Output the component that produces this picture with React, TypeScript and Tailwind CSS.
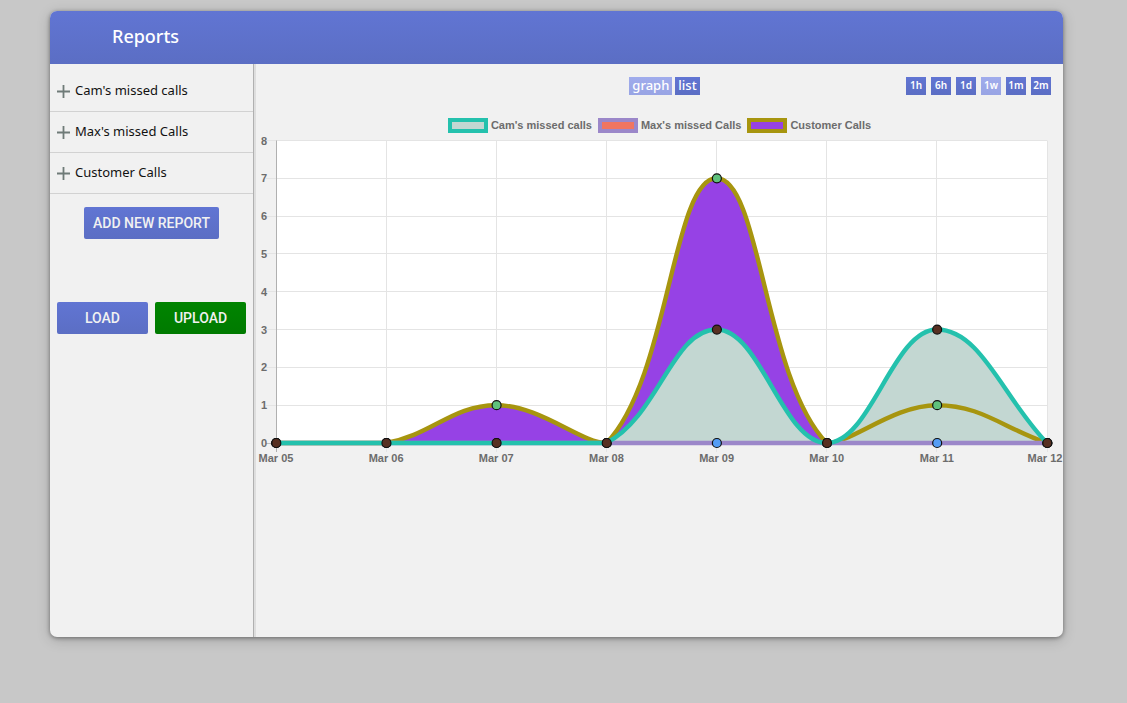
import React from "react";

type Series = {
  name: string;
  values: number[];
  line: string;
  fill: string;
  point: string;
  swatch: string;
};

const days = ["Mar 05", "Mar 06", "Mar 07", "Mar 08", "Mar 09", "Mar 10", "Mar 11", "Mar 12"];

const series: Series[] = [
  {
    name: "Cam's missed calls",
    values: [0, 0, 0, 0, 3, 0, 3, 0],
    line: "#24c1ad",
    fill: "#c3d7d2",
    point: "#573022",
    swatch: "border-[#24c1ad] bg-[#c3d7d2]",
  },
  {
    name: "Max's missed Calls",
    values: [0, 0, 0, 0, 0, 0, 0, 0],
    line: "#9b87c9",
    fill: "#f07560",
    point: "#559df5",
    swatch: "border-[#9b87c9] bg-[#f07560]",
  },
  {
    name: "Customer Calls",
    values: [0, 0, 1, 0, 7, 0, 1, 0],
    line: "#a7950f",
    fill: "#9642e5",
    point: "#5fc17c",
    swatch: "border-[#a7950f] bg-[#9642e5]",
  },
];

const WIDTH = 807;
const LEFT = 20;
const RIGHT = 791;
const TOP = 7.5;
const BOTTOM = 310;
const MAX = 8;

const xAt = (i: number) => LEFT + ((RIGHT - LEFT) * i) / (days.length - 1);
const yAt = (v: number) => BOTTOM - ((BOTTOM - TOP) * v) / MAX;
const clampY = (y: number) => Math.min(BOTTOM, Math.max(TOP, y));
const crisp = (n: number) => Math.floor(n) + 0.5;
const labelX = (i: number) => Math.min(xAt(i), WIDTH - 18);

function curve(values: number[], tension = 0.4) {
  const pts = values.map((v, i) => ({ x: xAt(i), y: yAt(v) }));
  const handles = pts.map((p, i) => {
    const a = pts[Math.max(0, i - 1)];
    const b = pts[Math.min(pts.length - 1, i + 1)];
    const da = Math.hypot(p.x - a.x, p.y - a.y);
    const db = Math.hypot(b.x - p.x, b.y - p.y);
    const fa = (tension * da) / (da + db);
    const fb = (tension * db) / (da + db);
    return {
      inX: p.x - fa * (b.x - a.x),
      inY: clampY(p.y - fa * (b.y - a.y)),
      outX: p.x + fb * (b.x - a.x),
      outY: clampY(p.y + fb * (b.y - a.y)),
    };
  });
  return pts
    .map((p, i) =>
      i === 0
        ? `M${p.x},${p.y}`
        : `C${handles[i - 1].outX},${handles[i - 1].outY} ${handles[i].inX},${handles[i].inY} ${p.x},${p.y}`
    )
    .join(" ");
}

function Chart() {
  const backToFront = [...series].reverse();
  return (
    <svg viewBox={`0 0 ${WIDTH} 337`} className="block h-auto w-full" role="img" aria-label="Calls per day">
      <rect x={LEFT} y={TOP} width={RIGHT - LEFT} height={BOTTOM - TOP} fill="#fff" />
      {Array.from({ length: MAX + 1 }, (_, v) => (
        <path key={v} d={`M${LEFT - 10} ${crisp(yAt(v))}H${RIGHT}`} stroke={v === 0 ? "#bbb" : "#e4e4e4"} />
      ))}
      {days.map((d, i) => (
        <path key={d} d={`M${crisp(xAt(i))} ${TOP}V${BOTTOM + 9}`} stroke={i === 0 ? "#b0b0b0" : "#e4e4e4"} />
      ))}
      {backToFront.map((s) => (
        <path key={s.name} d={`${curve(s.values)} V${BOTTOM} H${LEFT} Z`} fill={s.fill} />
      ))}
      {backToFront.map((s) => (
        <g key={s.name}>
          <path d={curve(s.values)} fill="none" stroke={s.line} strokeWidth={4.4} />
          {s.values.map((v, i) => (
            <circle key={i} cx={xAt(i) + 0.3} cy={yAt(v)} r={4.5} fill={s.point} stroke="#111" strokeWidth={1.2} />
          ))}
        </g>
      ))}
      <g className="fill-[#6c6c6c] font-['Liberation_Sans',Arial,sans-serif] text-[11px] font-bold">
        {Array.from({ length: MAX + 1 }, (_, v) => (
          <text key={v} x={11} y={yAt(v) + 4} textAnchor="end">
            {v}
          </text>
        ))}
        {days.map((d, i) => (
          <text key={d} x={labelX(i)} y={329} textAnchor="middle">
            {d}
          </text>
        ))}
      </g>
    </svg>
  );
}

const blue = "bg-linear-to-b from-[#6175d3] to-[#5b6ec4] text-white";
const pale = "bg-linear-to-b from-[#a0acec] to-[#98a4e4] text-white";
const action = "h-8 rounded-[2px] pb-px font-['Roboto',sans-serif] text-sm font-medium text-[#f1f1f1]";

function PlusIcon() {
  return (
    <svg width="13" height="13" viewBox="0 0 13 13" aria-hidden="true" className="mt-px shrink-0">
      <path d="M0 6.5H13M6.5 0V13" stroke="#6f7b78" strokeWidth="1.8" />
    </svg>
  );
}

export default function App() {
  const ranges = ["1h", "6h", "1d", "1w", "1m", "2m"];
  return (
    <div className="min-h-screen bg-[#c8c8c8] pt-[11px] pr-16 pb-16 pl-[50px] font-['Noto_Sans',sans-serif]">
      <div className="overflow-hidden rounded-[7px] bg-[#f1f1f1] shadow-[0_1px_4px_rgba(0,0,0,0.4),0_3px_14px_rgba(0,0,0,0.18)]">
        <header className="flex h-[53px] items-center bg-linear-to-b from-[#6175d3] to-[#5b6ec4] pb-1 pl-[62px]">
          <h1 className="text-lg leading-6 font-medium text-white">Reports</h1>
        </header>
        <div className="flex min-h-[573px]">
          <aside className="w-[206px] shrink-0 border-r-2 border-[#dedede]">
            <div className="h-full border-r border-[#b0b0b0] pt-[7px]">
              <ul>
                {series.map((s) => (
                  <li key={s.name} className="border-b border-[#d2d2d2]">
                    <button className="flex h-10 w-full items-center gap-[5px] pl-[7px] text-left text-[13px] text-[#111]">
                      <PlusIcon />
                      {s.name}
                    </button>
                  </li>
                ))}
              </ul>
              <div className="mt-[13px] flex justify-center">
                <button className={`${action} bg-linear-to-b from-[#6175d3] to-[#5b6ec4] px-[9px]`}>ADD NEW REPORT</button>
              </div>
              <div className="mt-[63px] grid grid-cols-2 gap-[7px] px-[7px]">
                <button className={`${action} bg-linear-to-b from-[#6175d3] to-[#5b6ec4]`}>LOAD</button>
                <button className={`${action} bg-linear-to-b from-[#008400] to-[#007a00]`}>UPLOAD</button>
              </div>
            </div>
          </aside>
          <main className="min-w-0 flex-1 pt-[13px]">
            <div className="grid grid-cols-[1fr_auto_1fr] items-start pr-3 pl-[22px]">
              <div className="col-start-2 flex gap-[3px] text-[13px] font-medium leading-4">
                <button className={`${pale} h-[18px] px-[3px] pb-0.5`}>graph</button>
                <button className={`${blue} h-[18px] px-[3px] pb-0.5`}>list</button>
              </div>
              <div className="flex justify-end gap-[5px]">
                {ranges.map((r) => (
                  <button key={r} className={`${r === "1w" ? pale : blue} h-[18px] w-5 pb-0.5 text-[10px] font-semibold leading-4`}>
                    {r}
                  </button>
                ))}
              </div>
            </div>
            <ul className="mt-[23px] flex justify-center gap-1.5 font-['Liberation_Sans',Arial,sans-serif] text-[11px] font-bold leading-[14px] text-[#6c6c6c]">
              {series.map((s) => (
                <li key={s.name} className="flex gap-[3px]">
                  <span className={`h-[15px] w-10 border-4 ${s.swatch}`} />
                  {s.name}
                </li>
              ))}
            </ul>
            <Chart />
          </main>
        </div>
      </div>
    </div>
  );
}
